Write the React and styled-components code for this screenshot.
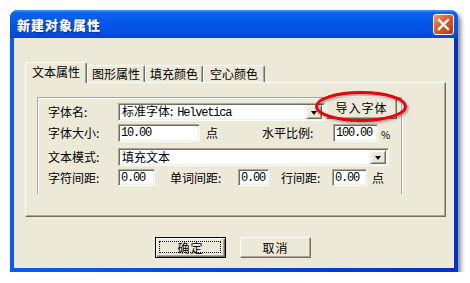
import React from "react";
import styled, { createGlobalStyle } from "styled-components";

const Global = createGlobalStyle`
  html, body { margin: 0; padding: 0; background: #ffffff; }
  body { font-family: "Noto Sans CJK SC", "Noto Sans", sans-serif; font-size: 12px; color: #000; }
`;

const CJK = `"Noto Sans CJK SC", "Noto Sans", sans-serif`;
const MONO = `"Liberation Mono", "Noto Sans CJK SC", monospace`;

const Window = styled.div`
  position: relative;
  margin: 10px 0 0 10px;
  width: 448px;
  height: 262px;
  box-sizing: border-box;
  display: flex;
  flex-direction: column;
  border-radius: 8px 8px 0 0;
  background: linear-gradient(90deg, #0A5CF0 0%, #0046D8 50%, #0034C4 100%);
  box-shadow: 3px 3px 4px rgba(0, 0, 0, 0.45);
`;

const TitleBar = styled.div`
  height: 28px;
  flex: none;
  display: flex;
  align-items: center;
  justify-content: space-between;
  padding: 0 4px 0 7px;
  border-radius: 8px 8px 0 0;
  background: linear-gradient(180deg, #4A97FA 0%, #0B62EC 10%, #0558E8 40%, #0252E2 75%, #0046D0 100%);
`;

const Title = styled.span`
  font-family: ${CJK};
  font-size: 13px;
  font-weight: 900;
  letter-spacing: 1px;
  color: #fff;
  text-shadow: 1px 1px 0 #0A2A9A;
  line-height: 1;
  padding-top: 1px;
`;

const CloseBtn = styled.div`
  width: 21px;
  height: 21px;
  box-sizing: border-box;
  border: 1px solid #fff;
  border-radius: 3px;
  background: linear-gradient(135deg, #F09878 0%, #E0602F 40%, #CC4519 75%, #B83412 100%);
  display: flex;
  align-items: center;
  justify-content: center;
`;

const Client = styled.div`
  flex: 1;
  margin: 0 4px 4px 4px;
  background: #ECE9D8;
  padding: 24px 8px 0 11px;
  display: flex;
  flex-direction: column;
`;

const TabStrip = styled.div`
  height: 20px;
  display: flex;
  align-items: flex-end;
  position: relative;
  z-index: 1;
`;

const Tab = styled.div`
  box-sizing: border-box;
  width: ${(p) => p.$w}px;
  height: ${(p) => (p.$active ? 21 : 17)}px;
  margin-bottom: ${(p) => (p.$active ? -1 : 0)}px;
  background: #ECE9D8;
  border-top: 1px solid #fff;
  border-left: 1px solid #fff;
  border-right: 1px solid #716F64;
  box-shadow: inset -1px 0 0 #ACA899;
  border-radius: 2px 2px 0 0;
  display: flex;
  align-items: center;
  justify-content: center;
  padding-bottom: ${(p) => (p.$active ? 3 : 0)}px;
  font-family: ${CJK};
  font-size: 12px;
  line-height: 1;
  white-space: nowrap;
`;

const Panel = styled.div`
  box-sizing: border-box;
  height: 135px;
  border-top: 1px solid #fff;
  border-left: 1px solid #fff;
  border-right: 1px solid #716F64;
  border-bottom: 1px solid #716F64;
  box-shadow: inset -1px -1px 0 #ACA899;
  padding: 14px 0 0 11px;
`;

const Group = styled.div`
  box-sizing: border-box;
  width: 365px;
  height: 97px;
  border-top: 1px solid #ACA899;
  border-left: 1px solid #ACA899;
  border-right: 1px solid #ACA899;
  box-shadow: inset 1px 1px 0 #fff, 1px 0 0 #fff;
  padding: 5px 0 0 10px;
  display: flex;
  flex-direction: column;
`;

const Row = styled.div`
  display: flex;
  align-items: center;
  height: ${(p) => p.$h}px;
  margin-top: ${(p) => p.$mt || 0}px;
`;

const Label = styled.span`
  width: ${(p) => p.$w}px;
  margin-left: ${(p) => p.$ml || 0}px;
  flex: none;
  font-family: ${CJK};
  font-size: 12px;
  line-height: 1;
  white-space: nowrap;
`;

const Unit = styled.span`
  margin-left: ${(p) => p.$ml || 0}px;
  font-family: ${CJK};
  font-size: ${(p) => p.$fs || 12}px;
  line-height: 1;
  align-self: ${(p) => (p.$low ? "flex-end" : "center")};
  padding-bottom: ${(p) => (p.$low ? 2 : 0)}px;
`;

const sunken = `
  box-sizing: border-box;
  background: #fff;
  border-top: 1px solid #ACA899;
  border-left: 1px solid #ACA899;
  border-bottom: 1px solid #fff;
  border-right: 1px solid #fff;
  box-shadow: inset 1px 1px 0 #716F64, inset -1px -1px 0 #F1EFE2;
`;

const Field = styled.div`
  ${sunken}
  width: ${(p) => p.$w}px;
  height: ${(p) => p.$h || 18}px;
  flex: none;
  display: flex;
  align-items: center;
  padding-left: 2px;
  font-family: ${MONO};
  font-size: 12px;
  letter-spacing: -1.2px;
  line-height: 1;
  white-space: nowrap;
  overflow: hidden;
`;

const Combo = styled.div`
  ${sunken}
  width: ${(p) => p.$w}px;
  height: 18px;
  flex: none;
  display: flex;
  align-items: center;
  padding: 2px 2px 2px 3px;
`;

const ComboText = styled.span`
  flex: 1;
  font-family: ${CJK};
  font-size: 12px;
  line-height: 1;
  white-space: nowrap;
`;

const Mono = styled.span`
  font-family: ${MONO};
  font-size: 12px;
  letter-spacing: -1.2px;
  margin-left: 4px;
`;

const DropBtn = styled.div`
  box-sizing: border-box;
  width: 16px;
  height: 14px;
  flex: none;
  background: #ECE9D8;
  border-top: 1px solid #F1EFE2;
  border-left: 1px solid #F1EFE2;
  border-right: 1px solid #716F64;
  border-bottom: 1px solid #716F64;
  box-shadow: inset 1px 1px 0 #fff, inset -1px -1px 0 #ACA899;
  display: flex;
  align-items: center;
  justify-content: center;
  &::after {
    content: "";
    width: 0;
    height: 0;
    border-left: 3.5px solid transparent;
    border-right: 3.5px solid transparent;
    border-top: 4px solid #000;
    margin-top: 1px;
  }
`;

const Button = styled.div`
  box-sizing: border-box;
  position: relative;
  width: ${(p) => p.$w}px;
  height: ${(p) => p.$h}px;
  margin-left: ${(p) => p.$ml || 0}px;
  margin-top: ${(p) => p.$mt || 0}px;
  align-self: ${(p) => (p.$top ? "flex-start" : "center")};
  flex: none;
  background: #ECE9D8;
  border-top: 1px solid #fff;
  border-left: 1px solid #fff;
  border-right: 1px solid #716F64;
  border-bottom: 1px solid #716F64;
  box-shadow: inset -1px -1px 0 #ACA899;
  display: flex;
  align-items: center;
  justify-content: center;
  font-family: ${CJK};
  font-size: 12px;
  line-height: 1;
  letter-spacing: 1px;
`;

const DefaultButton = styled(Button)`
  border: 1px solid #000;
  box-shadow: inset 1px 1px 0 #fff, inset -1px -1px 0 #716F64, inset -2px -2px 0 #ACA899;
  &::before {
    content: "";
    position: absolute;
    left: 3px;
    top: 3px;
    right: 4px;
    bottom: 4px;
    border: 1px dotted #000;
  }
`;

const ButtonRow = styled.div`
  display: flex;
  gap: 14px;
  margin-top: 20px;
  padding-left: 130px;
`;

const Ellipse = styled.svg`
  position: absolute;
  left: 301px;
  top: 76px;
  pointer-events: none;
  overflow: visible;
`;

export default function App() {
  return (
    <>
      <Global />
      <Window>
        <TitleBar>
          <Title>新建对象属性</Title>
          <CloseBtn>
            <svg width="13" height="13" viewBox="0 0 13 13">
              <path d="M2 2 L11 11 M11 2 L2 11" stroke="#fff" strokeWidth="2.4" strokeLinecap="square" />
            </svg>
          </CloseBtn>
        </TitleBar>
        <Client>
          <TabStrip>
            <Tab $w={62} $active>文本属性</Tab>
            <Tab $w={58}>图形属性</Tab>
            <Tab $w={58}>填充颜色</Tab>
            <Tab $w={62}>空心颜色</Tab>
          </TabStrip>
          <Panel>
            <Group>
              <Row $h={18}>
                <Label $w={70}>字体名:</Label>
                <Combo $w={207}>
                  <ComboText>
                    标准字体:<Mono>Helvetica</Mono>
                  </ComboText>
                  <DropBtn />
                </Combo>
                <Button $w={71} $h={23} $ml={1} $mt={-7} $top>导入字体</Button>
              </Row>
              <Row $h={18} $mt={3}>
                <Label $w={70}>字体大小:</Label>
                <Field $w={82}>10.00</Field>
                <Unit $ml={6}>点</Unit>
                <Label $w={71} $ml={44}>水平比例:</Label>
                <Field $w={45}>100.00</Field>
                <Unit $ml={3} $fs={10} $low>%</Unit>
              </Row>
              <Row $h={18} $mt={6}>
                <Label $w={70}>文本模式:</Label>
                <Combo $w={271}>
                  <ComboText>填充文本</ComboText>
                  <DropBtn />
                </Combo>
              </Row>
              <Row $h={17} $mt={3}>
                <Label $w={70}>字符间距:</Label>
                <Field $w={37} $h={17}>0.00</Field>
                <Label $w={68} $ml={15}>单词间距:</Label>
                <Field $w={31} $h={17}>0.00</Field>
                <Label $w={51} $ml={12}>行间距:</Label>
                <Field $w={35} $h={17}>0.00</Field>
                <Unit $ml={5}>点</Unit>
              </Row>
            </Group>
          </Panel>
          <ButtonRow>
            <DefaultButton $w={71} $h={21}>确定</DefaultButton>
            <Button $w={71} $h={21}>取消</Button>
          </ButtonRow>
        </Client>
        <Ellipse width="100" height="40" viewBox="0 0 100 40">
          <defs>
            <filter id="sh" x="-20%" y="-50%" width="140%" height="200%">
              <feDropShadow dx="1.5" dy="1.5" stdDeviation="1.2" floodColor="#000" floodOpacity="0.35" />
            </filter>
          </defs>
          <ellipse cx="50" cy="20.5" rx="44.5" ry="14" fill="none" stroke="#E8000A" strokeWidth="3" filter="url(#sh)" />
        </Ellipse>
      </Window>
    </>
  );
}
